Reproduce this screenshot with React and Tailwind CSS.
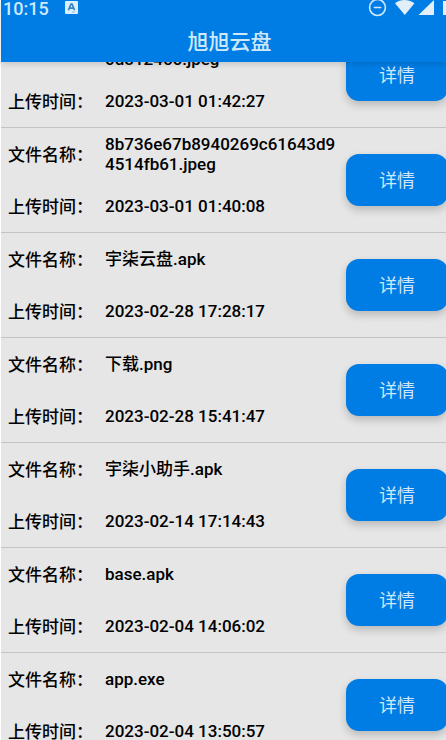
import { CircleMinus } from 'lucide-react';

const files = [
  { name: '580c7e91ab3d4862e07b9c5d0d812456.jpeg', time: '2023-03-01 01:42:27' },
  { name: '8b736e67b8940269c61643d94514fb61.jpeg', time: '2023-03-01 01:40:08' },
  { name: '宇柒云盘.apk', time: '2023-02-28 17:28:17' },
  { name: '下载.png', time: '2023-02-28 15:41:47' },
  { name: '宇柒小助手.apk', time: '2023-02-14 17:14:43' },
  { name: 'base.apk', time: '2023-02-04 14:06:02' },
  { name: 'app.exe', time: '2023-02-04 13:50:57' },
];

function StatusBar() {
  return (
    <div className="flex h-5 items-start justify-between pl-0.5 text-[#cfe9fb]">
      <div className="flex gap-4">
        <span className="text-[18px] font-medium leading-[18px]">10:15</span>
        <svg className="mt-px h-[13px] w-[13px]" viewBox="0 0 13 13">
          <rect width="13" height="13" rx="1" fill="#d9effc" />
          <path d="M3.4 9.3 6 3h1l2.6 6.3M4.6 7.2h3.8" fill="none" stroke="#3b83c0" strokeWidth="1.7" />
          <path d="M7 11h3" stroke="#8dbde0" strokeWidth="1" />
        </svg>
      </div>
      <div className="flex">
        <CircleMinus className="mr-2 h-[19px] w-[19px] -mt-0.5" strokeWidth={2} />
        <svg className="h-[15px] w-[51px]" viewBox="0 0 51 15" fill="#e3eff8">
          <path d="M0 3.200C3 .8 6 0 9.500 0S16 .8 19.500 3.200L9.800 15Z" />
          <path d="M39 0v15h-15.500Z" />
          <path d="M48 1h3v14h-3Z" />
        </svg>
      </div>
    </div>
  );
}

function Field({ label, value }) {
  return (
    <div className="flex h-[52px] items-center leading-5">
      <dt className="w-[97px] shrink-0 pt-0.5">{label}：</dt>
      <dd className="min-w-0 flex-1 break-all">{value}</dd>
    </div>
  );
}

function FileRow({ file }) {
  return (
    <li className="flex items-center overflow-hidden border-b border-[#c4c4c4] pl-[7px]">
      <dl className="min-w-0 flex-1 text-[17px] font-medium text-black">
        <Field label="文件名称" value={file.name} />
        <Field label="上传时间" value={file.time} />
      </dl>
      <button
        type="button"
        className="-mr-0.5 ml-1 h-[52px] w-[102px] shrink-0 rounded-[13px] bg-[#007de5] text-[18px] text-[#cde7f8] shadow-[0_4px_9px_rgba(0,0,0,0.2)]"
      >
        详情
      </button>
    </li>
  );
}

export default function App() {
  return (
    <div className="flex h-screen flex-col overflow-hidden bg-white pl-px font-['Roboto','Noto_Sans_CJK_SC',sans-serif]">
      <header className="relative z-10 h-[62px] shrink-0 bg-[#007de5] shadow-[0_2px_6px_rgba(0,0,0,0.15)]">
        <StatusBar />
        <h1 className="pl-3 text-center text-[21px] font-medium leading-[44px] text-[#cde9fa]">旭旭云盘</h1>
      </header>
      <main className="min-h-0 flex-1 overflow-hidden bg-[#e6e6e6]">
        <ul className="-mt-[39px]">
          {files.map((file) => (
            <FileRow key={file.time} file={file} />
          ))}
        </ul>
      </main>
    </div>
  );
}
